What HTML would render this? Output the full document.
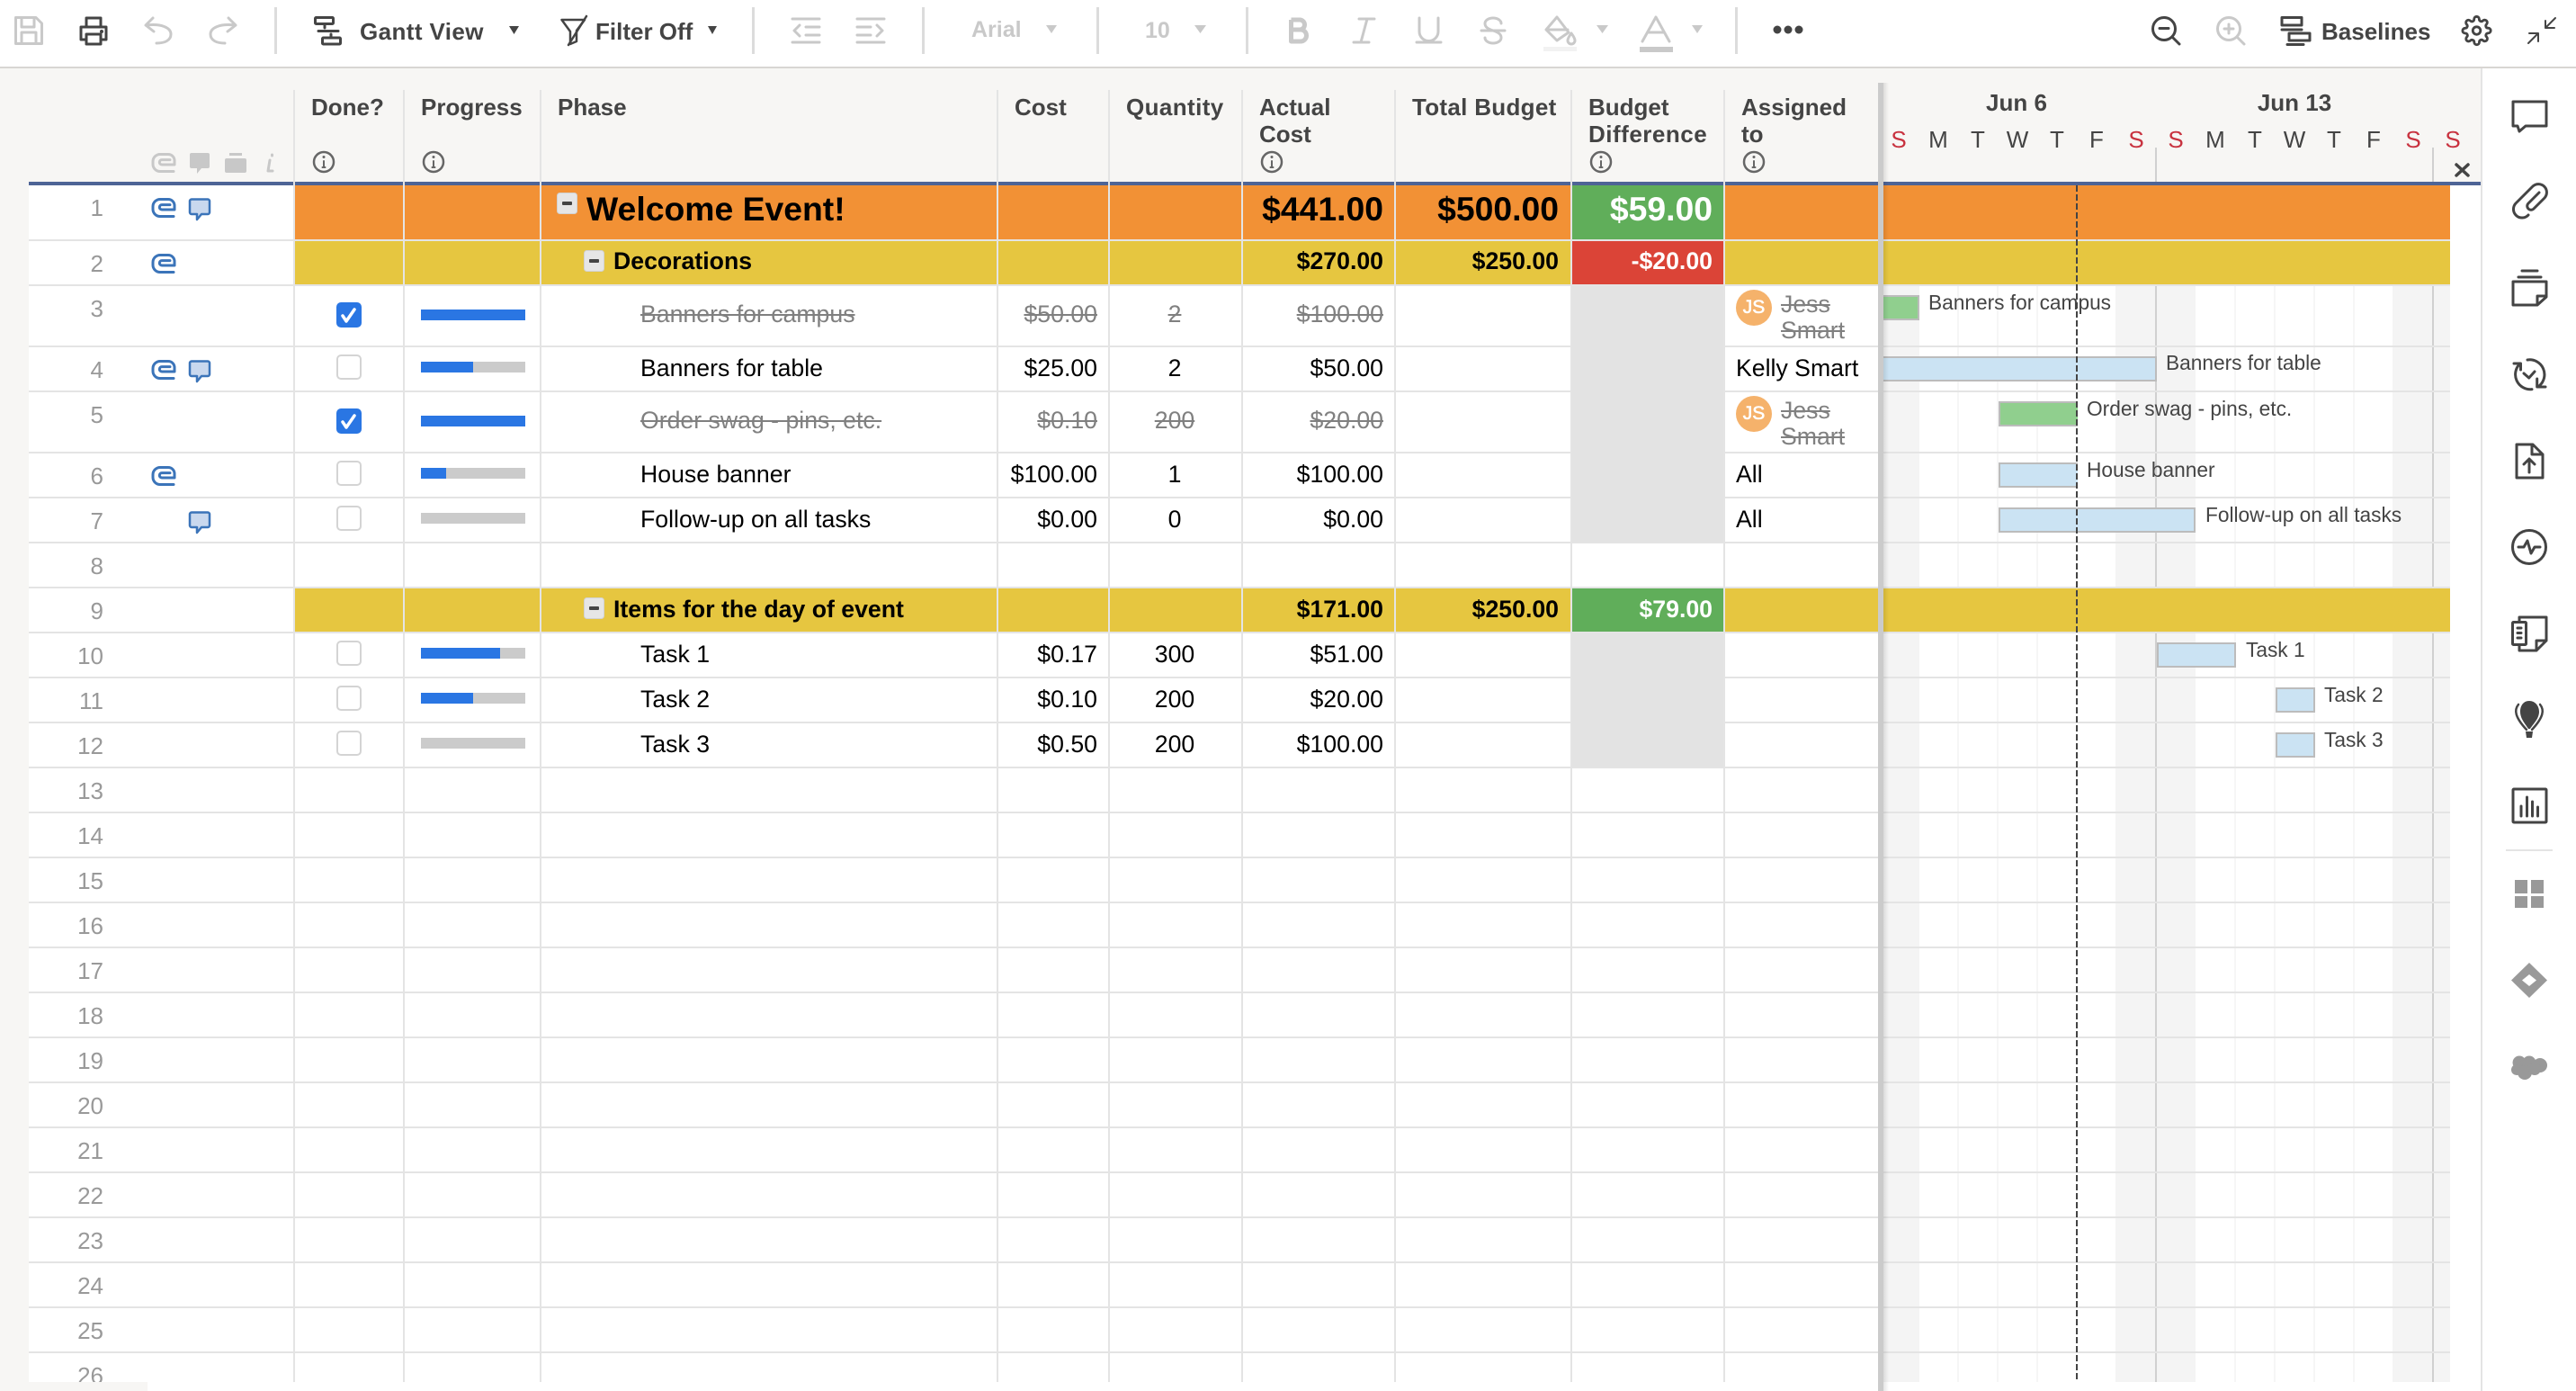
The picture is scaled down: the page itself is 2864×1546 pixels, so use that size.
<!DOCTYPE html>
<html lang="en"><head><meta charset="utf-8"><title>Gantt View</title>
<style>
html,body{margin:0;padding:0;background:#fff}
#p{position:relative;width:2864px;height:1546px;overflow:hidden;background:#fff;font-family:"Liberation Sans",Arial,sans-serif}
#p div{position:absolute;box-sizing:border-box}
.t{white-space:nowrap;line-height:30px;font-size:26.67px;color:#000}
.b{font-weight:bold}
.x{color:#808080;text-decoration:line-through}
.c{text-align:center;left:1236px;width:140px}
.h{white-space:nowrap;line-height:30px;font-size:26px;font-weight:bold;color:#444}
.n{white-space:nowrap;line-height:30px;font-size:26px;color:#999;right:2749px}
.g{white-space:nowrap;line-height:30px;font-size:22.7px;color:#444}
.d{width:44px;text-align:center;top:140px;line-height:30px;font-size:26px;color:#444}
.r{color:#c8323f}
.l{background:#e4e4e4;height:2px;left:32px;width:2692px}
.v{background:#e4e4e4;width:2px;top:100px;height:1436px}
.dl{background:#f6f6f6;width:2px;top:318px;height:1218px}
.wk{background:#d0d0d0;width:2px;top:318px;height:1218px}
.we{background:#f4f4f4;top:318px;height:1218px}
.bar{border:2px solid #bcbcbc;background:#cbe3f3;height:28px}
.gr{background:#90cf8e}
.o{background:#f29135;top:206px;height:60px}
.y{background:#e6c640;height:48px}
.sep{background:#dcdcdc;width:3px;top:8px;height:52px}
.pb{background:#cbcbcb;left:468px;width:116px;height:12px}
.pf{background:#2a76e3;left:468px;height:12px}
.av{background:#f5b26b;border-radius:50%;width:40px;height:40px;left:1930px;color:#fff;font-size:21px;line-height:40px;text-align:center;-webkit-text-stroke:.6px #fff}
</style></head><body>
<div id="p">
<!-- header / side backgrounds -->
<div style="left:0;top:76px;width:2758px;height:126px;background:#f7f6f4"></div>
<div style="left:0;top:202px;width:32px;height:1344px;background:#f7f6f4"></div>
<div style="left:0;top:74px;width:2864px;height:2px;background:#d8d6d3"></div>
<div style="left:32px;top:202px;width:2726px;height:4px;background:#4e6496"></div>
<div style="left:2758px;top:76px;width:2px;height:1470px;background:#e4e4e4"></div>

<!-- toolbar separators & text -->
<div class="sep" style="left:305px"></div><div class="sep" style="left:836px"></div><div class="sep" style="left:1025px"></div><div class="sep" style="left:1219px"></div><div class="sep" style="left:1385px"></div><div class="sep" style="left:1929px"></div>
<div class="h" style="left:400px;top:20px;letter-spacing:.4px">Gantt View</div>
<div class="h" style="left:662px;top:20px">Filter Off</div>
<div class="h" style="left:1080px;top:18px;color:#c9c9c9;font-size:25px">Arial</div>
<div class="h" style="left:1273px;top:19px;color:#c9c9c9;font-size:25px">10</div>
<div class="h" style="left:2581px;top:20px">Baselines</div>

<!-- gantt weekends & grid -->
<div class="we" style="left:2094px;width:40px"></div>
<div class="we" style="left:2352px;width:89px"></div>
<div class="we" style="left:2660px;width:64px"></div>
<div class="dl" style="left:2176px"></div><div class="dl" style="left:2220px"></div><div class="dl" style="left:2264px"></div>
<div class="dl" style="left:2484px"></div><div class="dl" style="left:2528px"></div><div class="dl" style="left:2572px"></div><div class="dl" style="left:2616px"></div>
<div class="wk" style="left:2396px"></div><div class="wk" style="left:2704px"></div>
<div class="wk" style="left:2396px;top:164px;height:38px"></div><div class="wk" style="left:2704px;top:164px;height:38px"></div>

<!-- row lines -->
<div class="l" style="top:266px"></div><div class="l" style="top:316px"></div><div class="l" style="top:384px"></div><div class="l" style="top:434px"></div><div class="l" style="top:502px"></div><div class="l" style="top:552px"></div><div class="l" style="top:602px"></div><div class="l" style="top:652px"></div><div class="l" style="top:702px"></div><div class="l" style="top:752px"></div><div class="l" style="top:802px"></div><div class="l" style="top:852px"></div>
<div style="left:32px;top:854px;width:2692px;height:682px;background:repeating-linear-gradient(to bottom,transparent 0,transparent 48px,#e4e4e4 48px,#e4e4e4 50px)"></div>

<!-- colored rows -->
<div class="o" style="left:328px;width:2396px"></div>
<div class="y" style="left:328px;width:2396px;top:268px"></div>
<div class="y" style="left:328px;width:2396px;top:654px"></div>
<div style="left:1748px;top:206px;width:169px;height:60px;background:#60ae5a"></div>
<div style="left:1748px;top:268px;width:169px;height:48px;background:#db4437"></div>
<div style="left:1748px;top:654px;width:169px;height:48px;background:#60ae5a"></div>
<div style="left:1748px;top:318px;width:169px;height:284px;background:#e3e3e3"></div>
<div style="left:1748px;top:704px;width:169px;height:148px;background:#e3e3e3"></div>

<!-- column lines -->
<div class="v" style="left:326px"></div><div class="v" style="left:448px"></div><div class="v" style="left:600px"></div><div class="v" style="left:1108px"></div><div class="v" style="left:1232px"></div><div class="v" style="left:1380px"></div><div class="v" style="left:1550px"></div><div class="v" style="left:1746px"></div><div class="v" style="left:1916px"></div>

<!-- headers -->
<div class="h" style="left:346px;top:104px">Done?</div>
<div class="h" style="left:468px;top:104px">Progress</div>
<div class="h" style="left:620px;top:104px">Phase</div>
<div class="h" style="left:1128px;top:104px">Cost</div>
<div class="h" style="left:1252px;top:104px;letter-spacing:.4px">Quantity</div>
<div class="h" style="left:1400px;top:104px">Actual</div><div class="h" style="left:1400px;top:134px">Cost</div>
<div class="h" style="left:1570px;top:104px;letter-spacing:.3px">Total Budget</div>
<div class="h" style="left:1766px;top:104px">Budget</div><div class="h" style="left:1766px;top:134px;letter-spacing:.5px">Difference</div>
<div class="h" style="left:1936px;top:104px">Assigned</div><div class="h" style="left:1936px;top:134px">to</div>

<div class="h" style="left:2192px;width:100px;text-align:center;top:99px">Jun 6</div>
<div class="h" style="left:2501px;width:100px;text-align:center;top:99px">Jun 13</div>
<div class="d r" style="left:2089px">S</div><div class="d" style="left:2133px">M</div><div class="d" style="left:2177px">T</div><div class="d" style="left:2221px">W</div><div class="d" style="left:2265px">T</div><div class="d" style="left:2309px">F</div><div class="d r" style="left:2353px">S</div>
<div class="d r" style="left:2397px">S</div><div class="d" style="left:2441px">M</div><div class="d" style="left:2485px">T</div><div class="d" style="left:2529px">W</div><div class="d" style="left:2573px">T</div><div class="d" style="left:2617px">F</div><div class="d r" style="left:2661px">S</div><div class="d r" style="left:2705px">S</div>

<!-- row numbers -->
<div class="n" style="top:216px">1</div><div class="n" style="top:278px">2</div><div class="n" style="top:328px">3</div><div class="n" style="top:396px">4</div><div class="n" style="top:446px">5</div><div class="n" style="top:514px">6</div><div class="n" style="top:564px">7</div><div class="n" style="top:614px">8</div><div class="n" style="top:664px">9</div><div class="n" style="top:714px">10</div><div class="n" style="top:764px">11</div><div class="n" style="top:814px">12</div><div class="n" style="top:864px">13</div><div class="n" style="top:914px">14</div><div class="n" style="top:964px">15</div><div class="n" style="top:1014px">16</div><div class="n" style="top:1064px">17</div><div class="n" style="top:1114px">18</div><div class="n" style="top:1164px">19</div><div class="n" style="top:1214px">20</div><div class="n" style="top:1264px">21</div><div class="n" style="top:1314px">22</div><div class="n" style="top:1364px">23</div><div class="n" style="top:1414px">24</div><div class="n" style="top:1464px">25</div><div class="n" style="top:1514px">26</div>

<!-- progress -->
<div class="pb" style="top:344px"></div><div class="pf" style="top:344px;width:116px"></div>
<div class="pb" style="top:402px"></div><div class="pf" style="top:402px;width:58px"></div>
<div class="pb" style="top:462px"></div><div class="pf" style="top:462px;width:116px"></div>
<div class="pb" style="top:520px"></div><div class="pf" style="top:520px;width:28px"></div>
<div class="pb" style="top:570px"></div>
<div class="pb" style="top:720px"></div><div class="pf" style="top:720px;width:88px"></div>
<div class="pb" style="top:770px"></div><div class="pf" style="top:770px;width:58px"></div>
<div class="pb" style="top:820px"></div>

<!-- row text -->
<div class="t b" style="left:652px;top:217px;font-size:37.33px">Welcome Event!</div>
<div class="t b" style="right:1326px;top:217px;font-size:37.33px">$441.00</div>
<div class="t b" style="right:1131px;top:217px;font-size:37.33px">$500.00</div>
<div class="t b" style="right:960px;top:217px;font-size:37.33px;color:#fff">$59.00</div>

<div class="t b" style="left:682px;top:275px">Decorations</div>
<div class="t b" style="right:1326px;top:275px">$270.00</div>
<div class="t b" style="right:1131px;top:275px">$250.00</div>
<div class="t b" style="right:960px;top:275px;color:#fff">-$20.00</div>

<div class="t x" style="left:712px;top:334px">Banners for campus</div>
<div class="t x" style="right:1644px;top:334px">$50.00</div>
<div class="t x c" style="top:334px">2</div>
<div class="t x" style="right:1326px;top:334px">$100.00</div>
<div class="av" style="top:322px">JS</div>
<div class="t x" style="left:1980px;top:323px">Jess</div>
<div class="t x" style="left:1980px;top:352px">Smart</div>

<div class="t" style="left:712px;top:394px">Banners for table</div>
<div class="t" style="right:1644px;top:394px">$25.00</div>
<div class="t c" style="top:394px">2</div>
<div class="t" style="right:1326px;top:394px">$50.00</div>
<div class="t" style="left:1930px;top:394px">Kelly Smart</div>

<div class="t x" style="left:712px;top:452px">Order swag - pins, etc.</div>
<div class="t x" style="right:1644px;top:452px">$0.10</div>
<div class="t x c" style="top:452px">200</div>
<div class="t x" style="right:1326px;top:452px">$20.00</div>
<div class="av" style="top:440px">JS</div>
<div class="t x" style="left:1980px;top:441px">Jess</div>
<div class="t x" style="left:1980px;top:470px">Smart</div>

<div class="t" style="left:712px;top:512px">House banner</div>
<div class="t" style="right:1644px;top:512px">$100.00</div>
<div class="t c" style="top:512px">1</div>
<div class="t" style="right:1326px;top:512px">$100.00</div>
<div class="t" style="left:1930px;top:512px">All</div>

<div class="t" style="left:712px;top:562px">Follow-up on all tasks</div>
<div class="t" style="right:1644px;top:562px">$0.00</div>
<div class="t c" style="top:562px">0</div>
<div class="t" style="right:1326px;top:562px">$0.00</div>
<div class="t" style="left:1930px;top:562px">All</div>

<div class="t b" style="left:682px;top:662px">Items for the day of event</div>
<div class="t b" style="right:1326px;top:662px">$171.00</div>
<div class="t b" style="right:1131px;top:662px">$250.00</div>
<div class="t b" style="right:960px;top:662px;color:#fff">$79.00</div>

<div class="t" style="left:712px;top:712px">Task 1</div>
<div class="t" style="right:1644px;top:712px">$0.17</div>
<div class="t c" style="top:712px">300</div>
<div class="t" style="right:1326px;top:712px">$51.00</div>

<div class="t" style="left:712px;top:762px">Task 2</div>
<div class="t" style="right:1644px;top:762px">$0.10</div>
<div class="t c" style="top:762px">200</div>
<div class="t" style="right:1326px;top:762px">$20.00</div>

<div class="t" style="left:712px;top:812px">Task 3</div>
<div class="t" style="right:1644px;top:812px">$0.50</div>
<div class="t c" style="top:812px">200</div>
<div class="t" style="right:1326px;top:812px">$100.00</div>

<!-- gantt bars & labels -->
<div class="bar gr" style="left:2094px;top:328px;width:40px;border-left:0"></div>
<div class="g" style="left:2144px;top:321px">Banners for campus</div>
<div class="bar" style="left:2094px;top:396px;width:304px;border-left:0"></div>
<div class="g" style="left:2408px;top:388px">Banners for table</div>
<div class="bar gr" style="left:2222px;top:446px;width:88px;border-right:0"></div>
<div class="g" style="left:2320px;top:439px">Order swag - pins, etc.</div>
<div class="bar" style="left:2222px;top:514px;width:88px;border-right:0"></div>
<div class="g" style="left:2320px;top:507px">House banner</div>
<div class="bar" style="left:2222px;top:564px;width:219px"></div>
<div class="g" style="left:2452px;top:557px">Follow-up on all tasks</div>
<div class="bar" style="left:2398px;top:714px;width:88px"></div>
<div class="g" style="left:2497px;top:707px">Task 1</div>
<div class="bar" style="left:2530px;top:764px;width:44px"></div>
<div class="g" style="left:2584px;top:757px">Task 2</div>
<div class="bar" style="left:2530px;top:814px;width:44px"></div>
<div class="g" style="left:2584px;top:807px">Task 3</div>

<!-- bottom patches -->
<div style="left:32px;top:1536px;width:132px;height:10px;background:#f7f6f4"></div>
<div style="left:164px;top:1536px;width:1924px;height:10px;background:#fff"></div>
<div style="left:2094px;top:1536px;width:664px;height:10px;background:#fff"></div>

<!-- divider -->
<div style="left:2088px;top:92px;width:6px;height:1454px;background:#cbcbcb"></div>
<div style="left:2094px;top:92px;width:6px;height:1454px;background:linear-gradient(to right,rgba(0,0,0,.1),rgba(0,0,0,0))"></div>

<svg width="2864" height="1546" viewBox="0 0 2864 1546" style="position:absolute;left:0;top:0" fill="none" stroke-linecap="round" stroke-linejoin="round">
<defs>
<path id="clip" d="M25 20.5H10a8 8 0 0 1-8-8v-3a8 8 0 0 1 8-8h9a7 7 0 0 1 7 7V13H12a2.7 2.7 0 0 1 0-5.4h9" stroke="currentColor" stroke-width="3"/>
<path id="cm" d="M3 1.5h18a2 2 0 0 1 2 2V16a2 2 0 0 1-2 2h-7l-5 6v-6H3a2 2 0 0 1-2-2V3.500a2 2 0 0 1 2-2z" stroke="#3b74b9" stroke-width="2.5" fill="#c9d8ee"/>
<g id="cb"><rect x="1" y="1" width="26" height="26" rx="4" fill="#fff" stroke="#d4d4d4" stroke-width="2"/></g>
<g id="ck"><rect width="28" height="28" rx="5" fill="#2a76e3"/><path d="M7 15l4 6L20 8" stroke="#fff" stroke-width="3.500"/></g>
<g id="mn"><rect x=".5" y=".5" width="22" height="23" rx="3" fill="#e6e6e6" stroke="#d2d2d2"/><rect x="6" y="10" width="11" height="4" rx="1" fill="#444"/></g>
<g id="inf"><circle r="11" stroke="#666" stroke-width="2.500"/><path d="M0-1V6M-1.500 6H1.500" stroke="#666" stroke-width="2"/><circle cy="-5.500" r="1.500" fill="#666"/></g>
</defs>

<!-- toolbar left -->
<g stroke="#c9c9c9" stroke-width="3">
<path d="M17.500 19.500H40L46.500 26V48.500H17.500Z M24 19.500V30H38V19.500 M24 48.500V36H40V48.500"/>
<path d="M170 20L162 28L171 35M163 28C180 26 190 31 190 38C190 45 183 48 174 48"/>
<path d="M254 20L262 28L253 35M261 28C244 26 234 31 234 38C234 45 241 48 250 48"/>
<path d="M881 21H911M896 30H911M896 39H911M881 47H911M889 28L883 34L889 40"/>
<path d="M953 21H983M953 30H968M953 39H968M953 47H983M975 28L981 34L975 40"/>
<path d="M1511 21H1528M1505 47H1522M1520 21L1513 47"/>
<path d="M1578 20V35a10.500 10.500 0 0 0 21 0V20M1575 47H1602"/>
<path d="M1669 26a9 6 0 0 0-18 0c0 4 3 6 9 8c6 2 9 4 9 8a9 6 0 0 1-18 0M1647 34H1673"/>
<path d="M1731 19L1744 36L1731 45L1719 33ZM1720 33H1743"/>
<path d="M1747 37c-3 4-4 6-4 8a4 4 0 0 0 8 0c0-2-1-4-4-8z"/>
<path d="M1826 46L1841 19L1856 46M1832 36H1850"/>
</g>
<path d="M1435.500 22V46H1446a6.500 6.500 0 0 0 0-13H1437M1435.500 22H1445a5.500 5.500 0 0 1 0 11" stroke="#c9c9c9" stroke-width="5" stroke-linecap="butt"/>
<rect x="1716" y="52" width="37" height="5" fill="#f2f2f2"/>
<rect x="1823" y="52" width="37" height="6" fill="#c9c9c9"/>
<g fill="#c9c9c9"><path d="M1163 28H1175L1169 37Z"/><path d="M1328 28H1341L1334.500 37Z"/><path d="M1775 28H1788L1781.500 37Z"/><path d="M1881 28H1893L1887 37Z"/></g>
<g fill="#444"><path d="M566 29H577L571.500 38Z"/><path d="M787 29H797L792 38Z"/><circle cx="1976" cy="33" r="4.500"/><circle cx="1988" cy="33" r="4.500"/><circle cx="2000" cy="33" r="4.500"/></g>
<g stroke="#444" stroke-width="3">
<path d="M96 30V20H112V30M96 44H90V30H118V44H112M96 38H112V49H96Z"/>
<rect x="350.500" y="19.500" width="20" height="7" rx="1"/><rect x="358.500" y="42" width="20" height="7" rx="1"/><path d="M354 34.500H376M361 27V31M368 38V42"/>
<path d="M624.500 22H650L641 34V46L634 49V35Z" stroke-width="2.500"/><path d="M652 18L632 50" stroke-width="2.500"/>
<circle cx="2406" cy="32" r="12.500"/><path d="M2415 41L2423 49M2401 31.500H2411"/>
<path d="M2537 19.500H2559V28H2537ZM2537 33H2559M2545 37H2568V45H2545ZM2543 49.500H2561"/>
<g transform="translate(2736.500 17) scale(1.42)" stroke-width="2"><circle cx="12" cy="12" r="3"/><path d="M19.400 15a1.650 1.650 0 0 0 .33 1.820l.06.06a2 2 0 0 1 0 2.830 2 2 0 0 1-2.830 0l-.06-.06a1.650 1.650 0 0 0-1.820-.33 1.650 1.650 0 0 0-1 1.510V21a2 2 0 0 1-2 2 2 2 0 0 1-2-2v-.09A1.650 1.650 0 0 0 9 19.400a1.650 1.650 0 0 0-1.820.33l-.06.06a2 2 0 0 1-2.830 0 2 2 0 0 1 0-2.830l.06-.06a1.650 1.650 0 0 0 .33-1.820 1.650 1.650 0 0 0-1.510-1H3a2 2 0 0 1-2-2 2 2 0 0 1 2-2h.09A1.650 1.650 0 0 0 4.600 9a1.650 1.650 0 0 0-.33-1.820l-.06-.06a2 2 0 0 1 0-2.830 2 2 0 0 1 2.830 0l.06.06a1.650 1.650 0 0 0 1.820.33H9a1.650 1.650 0 0 0 1-1.510V3a2 2 0 0 1 2-2 2 2 0 0 1 2 2v.09a1.650 1.650 0 0 0 1 1.510 1.650 1.650 0 0 0 1.820-.33l.06-.06a2 2 0 0 1 2.830 0 2 2 0 0 1 0 2.830l-.06.06a1.650 1.650 0 0 0-.33 1.820V9a1.650 1.650 0 0 0 1.510 1H21a2 2 0 0 1 2 2 2 2 0 0 1-2 2h-.09a1.650 1.650 0 0 0-1.510 1z"/></g>
<path d="M2841 20L2830 31M2830 23V31H2840M2811 48L2822 37M2812 37H2822V46" stroke-width="2"/>
</g>
<circle cx="113" cy="35" r="2" fill="#444"/>
<g stroke="#c9c9c9" stroke-width="3"><circle cx="2478" cy="32" r="12.500"/><path d="M2487 41L2495 49M2473 32H2483M2478 27V37"/></g>

<!-- header mini icons -->
<use href="#clip" x="168" y="170" style="color:#c8c8c8"/>
<path d="M213 170h18a2 2 0 0 1 2 2v13a2 2 0 0 1-2 2h-7l-5 6v-6h-6a2 2 0 0 1-2-2v-13a2 2 0 0 1 2-2z" fill="#c8c8c8"/>
<rect x="250" y="176" width="24" height="16" rx="2" fill="#c8c8c8"/><rect x="255" y="170" width="14" height="3" fill="#c8c8c8"/>
<path d="M300 178L298 190H303M302.500 172V173" stroke="#c8c8c8" stroke-width="3"/>
<use href="#inf" x="360" y="180"/><use href="#inf" x="482" y="180"/><use href="#inf" x="1414" y="180"/><use href="#inf" x="1780" y="180"/><use href="#inf" x="1950" y="180"/>

<!-- row icons -->
<g style="color:#3b74b9"><use href="#clip" x="168" y="220"/><use href="#clip" x="168" y="282"/><use href="#clip" x="168" y="400"/><use href="#clip" x="168" y="518"/></g>
<use href="#cm" x="210" y="220"/><use href="#cm" x="210" y="400"/><use href="#cm" x="210" y="568"/>
<use href="#mn" x="619" y="214"/><use href="#mn" x="649" y="278"/><use href="#mn" x="649" y="664"/>
<use href="#ck" x="374" y="336"/><use href="#ck" x="374" y="454"/>
<use href="#cb" x="374" y="394"/><use href="#cb" x="374" y="512"/><use href="#cb" x="374" y="562"/><use href="#cb" x="374" y="712"/><use href="#cb" x="374" y="762"/><use href="#cb" x="374" y="812"/>

<!-- today line -->
<path d="M2309 206V1533" stroke="#444" stroke-width="2" stroke-dasharray="7 3" stroke-linecap="butt"/>
<!-- close x -->
<path d="M2731 183L2744 195M2744 183L2731 195" stroke="#444" stroke-width="3.500"/>

<!-- right panel -->
<g stroke="#444" stroke-width="3">
<path d="M2794 113H2831V140H2808L2801 146L2799 140H2794Z"/>
<path d="M2823 214L2811 226a4.240 4.240 0 0 0 6 6L2829 220a9.200 9.200 0 0 0-13-13L2797 226a9.550 9.550 0 0 0 14 13"/>
<path d="M2804 301H2821M2800 308H2825M2794 313H2831V330L2821 339H2794ZM2821 339V329H2831"/>
<path d="M2810 400A16.500 16.500 0 0 1 2823 429M2820.700 421V430H2830M2815 432.600A16.500 16.500 0 0 1 2802 404M2795 404H2802.500V411M2806 415L2811.700 420L2818 413"/>
<path d="M2798 494H2816L2827 505V531H2798ZM2815 494V505H2827M2812 525V511M2806 516L2812 510L2818 516"/>
<circle cx="2812" cy="608" r="18.500"/><path d="M2800 608H2806L2810 601L2814 615L2818 608H2824"/>
<path d="M2801 691V686H2831V712L2820 723H2801V717M2820 723V712H2831"/>
<rect x="2793.500" y="691.500" width="15" height="25" rx="1"/><path d="M2799 698H2803M2799 703.500H2803M2799 709H2803"/>
<rect x="2794" y="877" width="37" height="37" rx="1"/><path d="M2803 896V907M2809.500 886V907M2815.500 891V907M2821.500 897V907"/>
<path d="M2800 783C2795 789 2796 797 2809 811M2824 783C2829 789 2828 797 2815 811" stroke-width="2.500"/>
</g>
<path d="M2812 779C2805 779 2802 785 2802 791C2802 799 2808 805 2811 810H2813C2816 805 2823 799 2823 791C2823 785 2819 779 2812 779Z" fill="#444"/>
<path d="M2808 813H2816L2815 820H2809Z" fill="#444"/>
<path d="M2786 945H2838" stroke="#e4e4e4" stroke-width="2" stroke-linecap="butt"/>
<g fill="#999">
<rect x="2796" y="978" width="14" height="15"/><rect x="2814" y="978" width="14" height="15"/><rect x="2796" y="996" width="14" height="13"/><rect x="2814" y="996" width="14" height="13"/>
<path fill-rule="evenodd" d="M2812 1070L2832 1089.500L2812 1109L2792 1089.500ZM2812 1083L2804 1089.500L2812 1096L2820 1089.500Z"/>
<circle cx="2801" cy="1181" r="7.500"/><circle cx="2812" cy="1181" r="7.500"/><circle cx="2824" cy="1184" r="8"/><circle cx="2798" cy="1189" r="6"/><circle cx="2807" cy="1192" r="8"/><circle cx="2818" cy="1188" r="7"/>
</g>
</svg>
</div>
</body></html>
